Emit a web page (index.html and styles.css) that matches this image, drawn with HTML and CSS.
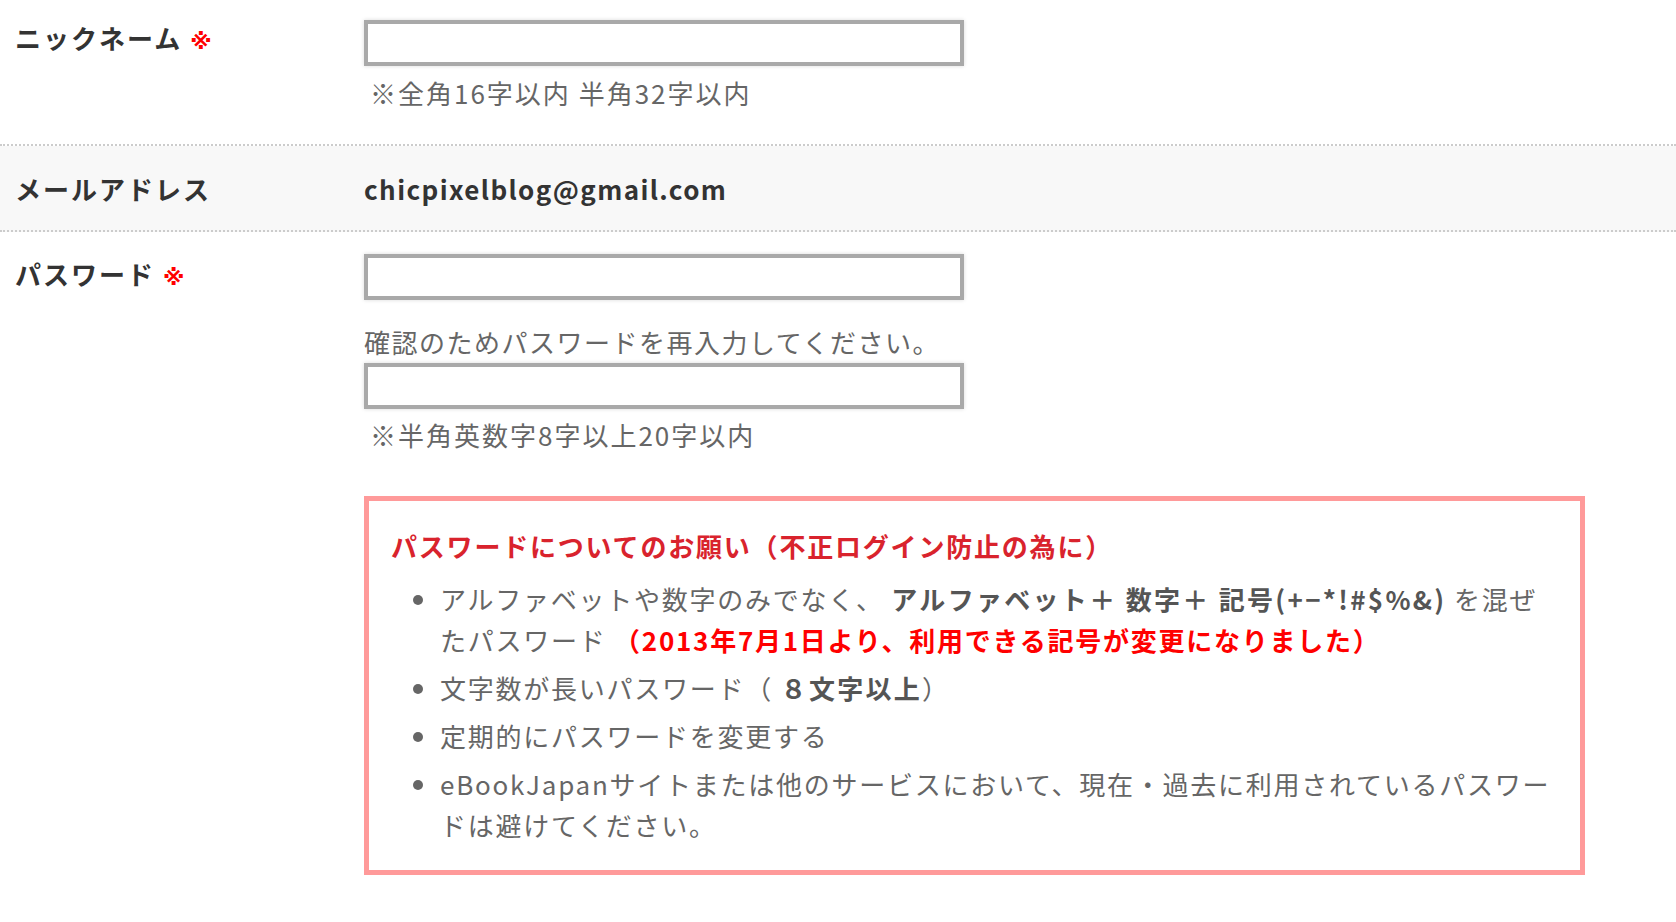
FILE: index.html
```html
<!DOCTYPE html>
<html lang="ja">
<head>
  <meta charset="UTF-8" />
  <meta name="viewport" content="width=device-width, initial-scale=1.0"/>
  <title>会員登録</title>
  <link rel="stylesheet" href="styles.css">
</head>
<body>
  <form class="regForm">
    <div class="row">
      <div class="label">ニックネーム <span class="req">※</span></div>
      <div class="field">
        <input type="text" class="textbox" />
        <p class="hint">※全角16字以内 半角32字以内</p>
      </div>
    </div>

    <div class="row row-gray">
      <div class="label label-static">メールアドレス</div>
      <div class="field">
        <p class="email">chicpixelblog@gmail.com</p>
      </div>
    </div>

    <div class="row row-last">
      <div class="label">パスワード <span class="req">※</span></div>
      <div class="field">
        <input type="password" class="textbox" />
        <p class="confirm">確認のためパスワードを再入力してください。</p>
        <input type="password" class="textbox" />
        <p class="hint hint-pw">※半角英数字8字以上20字以内</p>

        <div class="notice">
          <h3>パスワードについてのお願い（不正ログイン防止の為に）</h3>
          <ul>
            <li>アルファベットや数字のみでなく、 <b>アルファベット＋ 数字＋ 記号(+−*!#$%&amp;)</b> を混ぜたパスワード <strong>（2013年7月1日より、利用できる記号が変更になりました）</strong></li>
            <li>文字数が長いパスワード（ <b>８文字以上</b>）</li>
            <li>定期的にパスワードを変更する</li>
            <li>eBookJapanサイトまたは他のサービスにおいて、現在・過去に利用されているパスワードは避けてください。</li>
          </ul>
        </div>
      </div>
    </div>
  </form>
</body>
</html>
```

FILE: styles.css
```css
body {
  margin: 0;
  font-family: "Noto Sans CJK JP", "Noto Sans", sans-serif;
  font-size: 26px;
  color: #333;
  background-color: white;
}
p, h3, ul {
  margin: 0;
}
.row {
  display: grid;
  grid-template-columns: 364px 1fr;
  border-bottom: 2px dotted #ccc;
  padding: 20px 0 36px;
}
.row-gray {
  background-color: #f8f8f8;
  padding: 28px 0 26px;
}
.row-last {
  border-bottom: none;
  padding-top: 22px;
}
.label {
  padding-left: 15px;
  padding-top: 3px;
  font-weight: bold;
  line-height: 30px;
  letter-spacing: 2px;
}
.row-last .label {
  padding-top: 5px;
}
.label-static {
  padding-top: 0;
}
.req {
  color: #f00;
  font-family: "DejaVu Sans", sans-serif;
  font-size: 22px;
  font-weight: bold;
}
.textbox {
  display: block;
  box-sizing: border-box;
  width: 600px;
  height: 46px;
  border: 4px solid #a9a9a9;
  border-radius: 0;
  box-shadow: 0 0 4px rgba(0, 0, 0, 0.15);
  margin: 0;
  padding: 0 8px;
  font-size: 22px;
}
.hint {
  color: #666;
  line-height: 30px;
  margin-top: 12px;
  padding-left: 6px;
  letter-spacing: 2px;
}
.hint-pw {
  margin-top: 11px;
}
.email {
  font-weight: bold;
  line-height: 30px;
  letter-spacing: 1.4px;
}
.confirm {
  color: #666;
  line-height: 30px;
  margin-top: 27px;
  margin-bottom: 6px;
  letter-spacing: 1.5px;
}
.notice {
  margin-top: 46px;
  margin-right: 91px;
  border: 5px solid #ff9a9a;
  padding: 30px 24px 25px 22px;
}
.notice h3 {
  color: #d9232d;
  font-size: 26px;
  line-height: 30px;
  letter-spacing: 1.8px;
}
.notice ul {
  margin-top: 17px;
  padding-left: 49px;
  color: #666;
  line-height: 41px;
  letter-spacing: 1.75px;
}
.notice li {
  margin-bottom: 7px;
}
.notice li:last-child {
  margin-bottom: 0;
}
.notice b {
  color: #555;
  letter-spacing: 2.3px;
}
.notice strong {
  color: #f00;
}
```
